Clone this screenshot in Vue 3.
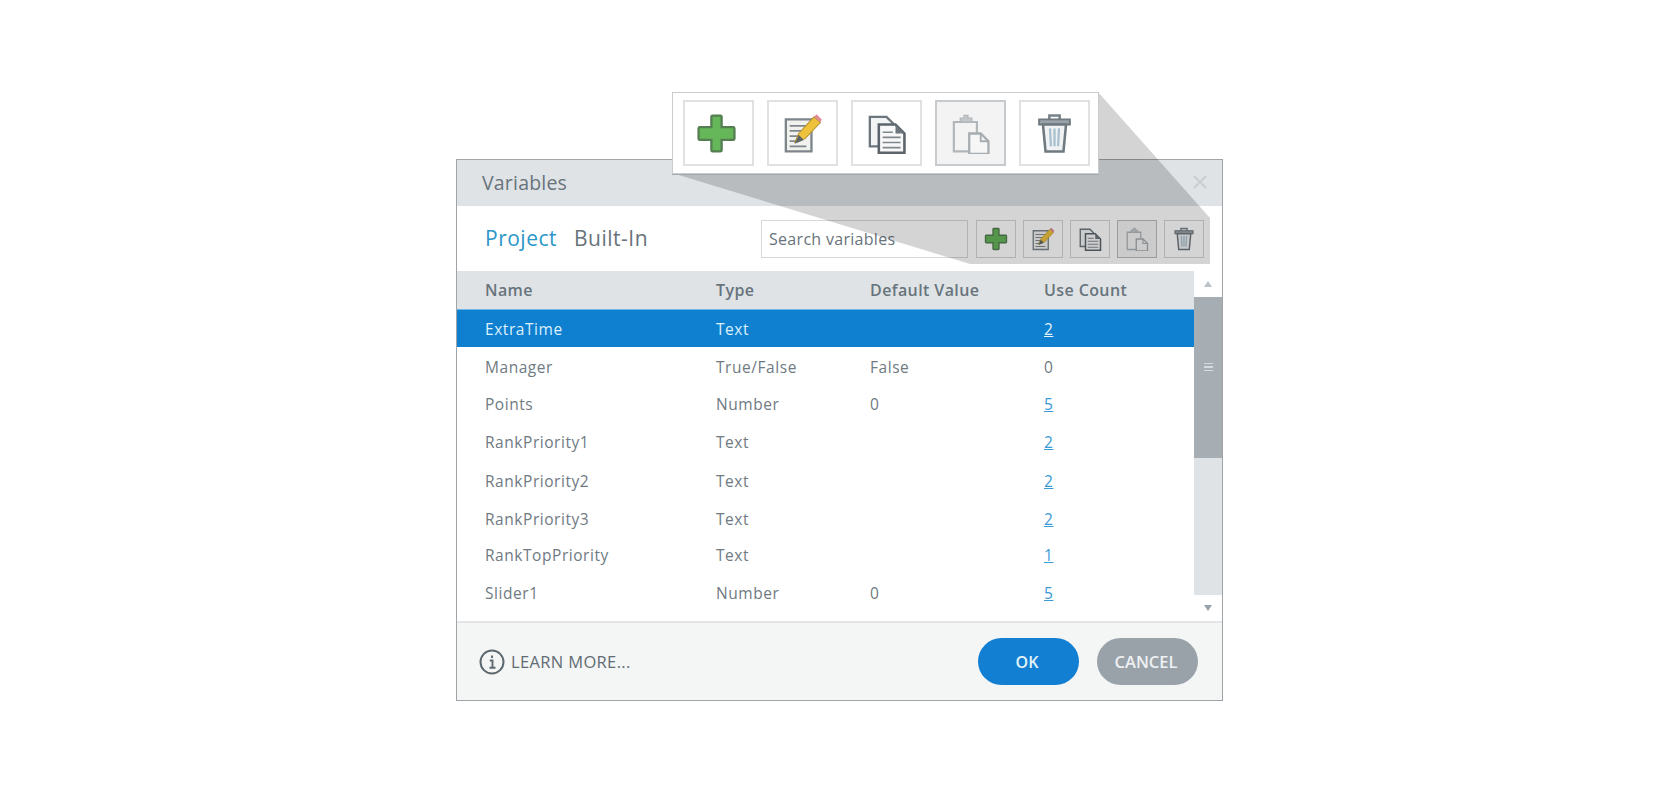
<script setup>
const tools = ['plus', 'edit', 'copy', 'paste', 'trash']
const rows = [
  { name: 'Manager', type: 'True/False', def: 'False', count: '0', h: 39 },
  { name: 'Points', type: 'Number', def: '0', count: '5', link: true, h: 35 },
  { name: 'RankPriority1', type: 'Text', def: '', count: '2', link: true, h: 42 },
  { name: 'RankPriority2', type: 'Text', def: '', count: '2', link: true, h: 35 },
  { name: 'RankPriority3', type: 'Text', def: '', count: '2', link: true, h: 42 },
  { name: 'RankTopPriority', type: 'Text', def: '', count: '1', link: true, h: 29 },
  { name: 'Slider1', type: 'Number', def: '0', count: '5', link: true, h: 48 },
]
</script>

<template>
  <div class="page">
    <svg class="defs" width="0" height="0" aria-hidden="true">
      <symbol id="i-plus" viewBox="0 0 32 32">
        <path d="M12 3a1 1 0 0 1 1-1h6a1 1 0 0 1 1 1v8h9a1 1 0 0 1 1 1v8a1 1 0 0 1-1 1h-9v8a1 1 0 0 1-1 1h-6a1 1 0 0 1-1-1v-8H3a1 1 0 0 1-1-1v-8a1 1 0 0 1 1-1h9z" fill="#66b65a" stroke="#557f52" stroke-width="1.800" />
      </symbol>
      <symbol id="i-edit" viewBox="0 0 32 32">
        <path d="M3 5h20v25H3z" fill="#f1f1ee" stroke="#7d858b" stroke-width="1.800" />
        <path d="M6 10h13M6 14h11M6 18h8M6 22h6M6 26h13" stroke="#7f878d" stroke-width="1.300" />
        <path d="M10 23l3-7L25 3l5 4.500L18 20z" fill="#efc23c" stroke="#b59332" stroke-width=".8" />
        <path d="M25 3l2-2 4 4-1 2.500z" fill="#e58b94" />
        <path d="M10 24l3-7 4 4z" fill="#5d6468" />
      </symbol>
      <symbol id="i-copy" viewBox="0 0 32 32">
        <path d="M3 3h13l5 5v18H3z" fill="#f3f4f4" stroke="#6d767d" stroke-width="1.800" />
        <path d="M10 9h13l7 7v15H10z" fill="#f8f8f8" stroke="#5c656c" stroke-width="2" />
        <path d="M23 9v7h7z" fill="#6d767d" />
        <path d="M13 15h8M13 19h14M13 23h14M13 27h14" stroke="#7f878d" stroke-width="1.300" />
      </symbol>
      <symbol id="i-paste" viewBox="0 0 32 32">
        <path d="M3 7h18v23H3z" fill="none" stroke="#b1b6ba" stroke-width="1.700" />
        <path d="M8 7V4h3V1.800h3V4h3v3z" fill="#c4c8cb" stroke="#b1b6ba" stroke-width="1" />
        <path d="M15 16h9l6 6v10H15z" fill="#f6f6f6" stroke="#a7adb1" stroke-width="1.800" />
        <path d="M24 16v6h6" fill="none" stroke="#a7adb1" stroke-width="1.500" />
      </symbol>
      <symbol id="i-trash" viewBox="0 0 32 32">
        <path d="M12 5V2h8v3" fill="none" stroke="#78828a" stroke-width="2" />
        <path d="M4 5h24v4H4z" fill="#9aa2a8" stroke="#6f7980" stroke-width="1.500" />
        <path d="M7 9l2 21h14l2-21z" fill="#f0f2f3" stroke="#6f7980" stroke-width="2" />
        <path d="M12.500 12l.7 14M16 12v14M19.500 12l-.7 14" stroke="#a9c0cf" stroke-width="1.800" />
      </symbol>
    </svg>

    <section class="dialog">
      <header class="title">
        <span>Variables</span>
        <svg class="close" viewBox="0 0 14 14" width="14" height="14"><path d="M1 1l12 12M13 1L1 13" stroke="#c9cdd0" stroke-width="2" /></svg>
      </header>

      <div class="toolbar">
        <nav class="tabs">
          <span class="tab active">Project</span>
          <span class="tab">Built-In</span>
        </nav>
        <div class="search">Search variables</div>
        <div class="tools">
          <button v-for="t in tools" :key="t" class="tool" :class="{ off: t === 'paste' }">
            <svg width="24" height="24"><use :href="'#i-' + t" /></svg>
          </button>
        </div>
      </div>

      <div class="list">
        <div class="table">
          <div class="row head">
            <span>Name</span><span>Type</span><span>Default Value</span><span>Use Count</span>
          </div>
          <div class="row selected">
            <span>ExtraTime</span><span>Text</span><span></span><span><u>2</u></span>
          </div>
          <div
            v-for="r in rows"
            :key="r.name"
            class="row"
            :style="{ height: r.h + 'px' }"
          >
            <span>{{ r.name }}</span>
            <span>{{ r.type }}</span>
            <span>{{ r.def }}</span>
            <span><a v-if="r.link" class="link">{{ r.count }}</a><template v-else>{{ r.count }}</template></span>
          </div>
        </div>
        <aside class="scrollbar">
          <div class="arrow"><i class="tri up"></i></div>
          <div class="track">
            <div class="thumb"><i class="grip"></i></div>
          </div>
          <div class="arrow"><i class="tri down"></i></div>
        </aside>
      </div>

      <footer class="footer">
        <div class="learn">
          <svg viewBox="0 0 26 26" width="26" height="26">
            <circle cx="13" cy="13" r="11.500" fill="none" stroke="#5d686f" stroke-width="2" />
            <path d="M13 6.500v2.500M10.800 11.500H13.500v7M10.500 18.800h6" fill="none" stroke="#5d686f" stroke-width="1.900" />
          </svg>
          <span>LEARN MORE...</span>
        </div>
        <div class="actions">
          <button class="btn ok">OK</button>
          <button class="btn cancel">CANCEL</button>
        </div>
      </footer>

      <svg class="shade" width="767" height="173" viewBox="0 0 767 173">
        <polygon points="215,13 513,104 753,104 753,58 641,-68" fill="#000" fill-opacity=".17" />
      </svg>

      <div class="callout">
        <button v-for="t in tools" :key="t" class="big" :class="{ off: t === 'paste', shifted: t === 'plus' }">
          <svg width="41" height="41"><use :href="'#i-' + t" /></svg>
        </button>
      </div>
    </section>
  </div>
</template>

<style scoped>
.page {
  width: 1680px;
  height: 793px;
  box-sizing: border-box;
  padding: 159px 0 0 456px;
  background: #fff;
  font-family: "Open Sans", "Noto Sans", sans-serif;
  color: #6f7a82;
  overflow: hidden;
}
.defs { position: absolute; }
button { font-family: inherit; padding: 0; }
.dialog {
  position: relative;
  width: 767px;
  height: 542px;
  box-sizing: border-box;
  border: 1px solid #a0a4a8;
  display: flex;
  flex-direction: column;
}
.title {
  height: 46px;
  flex: none;
  background: #dfe3e6;
  display: flex;
  align-items: center;
  justify-content: space-between;
  padding: 0 15px 2px 25px;
  box-sizing: border-box;
  font-size: 19.500px;
  letter-spacing: .2px;
  color: #67737b;
}
.toolbar {
  height: 65px;
  flex: none;
  box-sizing: border-box;
  display: flex;
  align-items: center;
  padding: 1px 16px 0 28px;
  background: #fff;
}
.tabs { display: flex; gap: 17px; width: 276px; font-size: 21px; letter-spacing: .5px; margin-top: -3px; }
.tab { color: #67737b; }
.tab.active { color: #2b96c9; }
.search {
  width: 207px;
  height: 38px;
  box-sizing: border-box;
  border: 1px solid #d5d8da;
  padding-left: 7px;
  line-height: 36px;
  font-size: 16px;
  letter-spacing: .3px;
  color: #68737b;
  margin-right: 8px;
}
.tools { display: flex; gap: 7px; }
.tool {
  width: 40px;
  height: 38px;
  border: 1px solid #d2d5d7;
  background: #fff;
  display: flex;
  align-items: center;
  justify-content: center;
}
.tool.off { border-color: #b9bdc0; background: #f4f4f4; }
.list { flex: none; height: 350px; display: flex; }
.table { width: 737px; flex: none; }
.row {
  display: grid;
  grid-template-columns: 231px 154px 174px 1fr;
  padding-left: 28px;
  align-items: center;
  height: 38px;
  font-size: 15.500px;
  letter-spacing: .55px;
  color: #6f7a82;
}
.head {
  background: #dfe3e6;
  font-weight: 600;
  font-size: 16px;
  letter-spacing: .4px;
  color: #68747c;
}
.selected { background: #0f7fd0; color: #dcf0fb; border-top: 1px solid #6cb7e6; box-sizing: border-box; }
.selected u { color: #e4f3fc; }
.link { color: #3a9ad6; text-decoration: underline; }
.scrollbar {
  flex: 1;
  display: flex;
  flex-direction: column;
}
.arrow {
  height: 26px;
  flex: none;
  background: #fff;
  display: flex;
  align-items: center;
  justify-content: center;
}
.tri { width: 0; height: 0; border-left: 4px solid transparent; border-right: 4px solid transparent; }
.tri.up { border-bottom: 6px solid #bcc2c6; }
.tri.down { border-top: 6px solid #9aa2a8; }
.track { flex: 1; background: #dfe3e6; }
.thumb {
  height: 161px;
  background: #a6aeb4;
  display: flex;
  align-items: center;
  justify-content: center;
  padding-bottom: 20px;
  box-sizing: border-box;
}
.grip {
  width: 9px;
  height: 9px;
  background: repeating-linear-gradient(#d5dade 0 1.500px, transparent 1.500px 3.500px);
}
.footer {
  flex: 1;
  background: #f4f5f5;
  border-top: 2px solid #e3e5e7;
  display: flex;
  align-items: center;
  justify-content: space-between;
  padding: 0 24px 0 22px;
  box-sizing: border-box;
}
.learn { display: flex; align-items: center; gap: 6px; font-size: 16.500px; letter-spacing: .35px; color: #616c74; }
.actions { display: flex; gap: 18px; }
.btn {
  width: 101px;
  height: 47px;
  border: 0;
  border-radius: 24px;
  font-size: 16px;
  font-weight: 600;
  padding-right: 3px;
}
.ok { background: #127fd3; color: #e3f3fc; }
.cancel { background: #9aa2a9; color: #eef1f3; font-size: 16.500px; }
.close { display: block; }
.shade { position: absolute; left: 0; top: 0; pointer-events: none; overflow: visible; }
.callout {
  position: absolute;
  left: 215px;
  top: -68px;
  width: 427px;
  height: 82px;
  box-sizing: border-box;
  background: #fff;
  border: 1px solid #c9cbcd;
  padding: 7px 7px 6px 10px;
  display: flex;
  gap: 13px;
  box-shadow: 0 1px 0 #a5a8ab;
}
.big {
  width: 71px;
  height: 66px;
  border: 2px solid #dfe1e2;
  background: #fff;
  display: flex;
  align-items: center;
  justify-content: center;
  padding: 0;
}
.big svg { filter: blur(.4px); }
.big.shifted svg { margin-right: 4px; }
.big.off { border-color: #c8cbcd; background: #f3f3f3; }
</style>

<style>
html, body { margin: 0; background: #fff; }
</style>
